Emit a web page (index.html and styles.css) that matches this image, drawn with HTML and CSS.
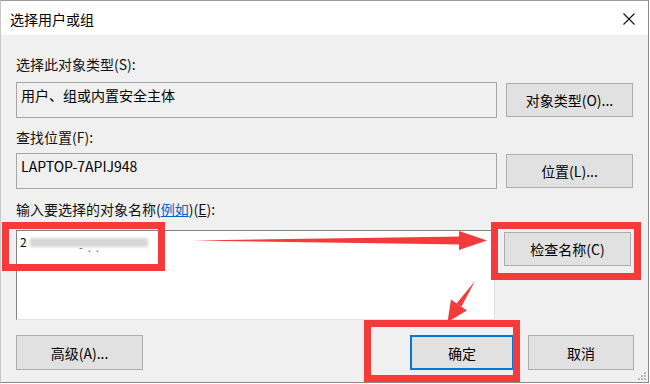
FILE: index.html
```html
<!DOCTYPE html>
<html lang="zh-CN">
<head>
<meta charset="utf-8">
<title>选择用户或组</title>
<link rel="stylesheet" href="styles.css">
</head>
<body>
<div class="window">
  <div class="titlebar">
    <span class="title">选择用户或组</span>
    <svg class="close" width="12" height="12" viewBox="0 0 12 12"><path d="M0.5 0.5 L11.5 11.5 M11.5 0.5 L0.5 11.5" stroke="#111" stroke-width="1.1" fill="none"/></svg>
  </div>
  <div class="content">
    <div class="label first">选择此对象类型(S):</div>
    <div class="row">
      <div class="field">用户、组或内置安全主体</div>
      <button class="btn">对象类型(O)...</button>
    </div>
    <div class="label second">查找位置(F):</div>
    <div class="row row2">
      <div class="field">LAPTOP-7APIJ948</div>
      <button class="btn">位置(L)...</button>
    </div>
    <div class="label third">输入要选择的对象名称(<a class="link">例如</a>)(<u>E</u>):</div>
    <div class="row row3">
      <div class="area"><span class="typed">2</span><span class="blur"></span><span class="dots">-&nbsp;&nbsp;.&nbsp;&nbsp;.</span></div>
      <button class="btn top">检查名称(C)</button>
    </div>
    <div class="bottom">
      <button class="btn">高级(A)...</button>
      <div class="spacer"></div>
      <button class="btn ok">确定</button>
      <button class="btn cancel">取消</button>
    </div>
  </div>
  <svg class="grip" width="8" height="8" viewBox="0 0 8 8"><g fill="#b5b5b5"><rect x="6" y="0" width="2" height="2"/><rect x="3" y="3" width="2" height="2"/><rect x="6" y="3" width="2" height="2"/><rect x="0" y="6" width="2" height="2"/><rect x="3" y="6" width="2" height="2"/><rect x="6" y="6" width="2" height="2"/></g></svg>
</div>
<svg class="marks" width="650" height="384" viewBox="0 0 650 384">
  <g fill="none" stroke="#f43a3a" stroke-width="7">
    <rect x="5.5" y="225.5" width="156" height="42"/>
    <rect x="494.5" y="225.5" width="143" height="51"/>
    <rect x="367.5" y="323.5" width="149" height="55"/>
  </g>
  <g fill="#f43a3a">
    <polygon points="192,240.5 463,236.5 463,244.5"/>
    <polygon points="459,231 487,240.5 459,250"/>
    <polygon points="475,281 461.5,306.5 456.5,303.5"/>
    <polygon points="467,310.5 447.5,322 451,299.5"/>
  </g>
</svg>
</body>
</html>
```

FILE: styles.css
```css
* { box-sizing: border-box; }
html, body {
  margin: 0;
  padding: 0;
  width: 650px;
  height: 384px;
  overflow: hidden;
  background: #ffffff;
}
body {
  position: relative;
  font-family: "Noto Sans CJK SC", "Noto Sans", sans-serif;
  font-size: 14px;
  color: #000;
}
.window {
  position: relative;
  width: 649px;
  height: 383px;
  border: 1px solid #8a8a8a;
  border-left-color: #c8c8c8;
  border-top-color: #9a9a9a;
  background: #f0f0f0;
  display: flex;
  flex-direction: column;
}
.titlebar {
  height: 34px;
  background: #ffffff;
  display: flex;
  align-items: center;
  padding: 0 13px 0 9px;
  flex-shrink: 0;
}
.title {
  flex: 1;
  line-height: 18px;
  padding-top: 1px;
}
.close { display: block; margin-top: 2px; }
.content {
  padding: 20px 14px 0 15px;
  display: flex;
  flex-direction: column;
}
.label {
  line-height: 18px;
  height: 18px;
  color: #111;
}
.label.first { margin-bottom: 9px; }
.label.second { margin-top: 10px; margin-bottom: 7px; }
.label.third { margin-top: 11px; margin-bottom: 12px; }
.link { color: #0066cc; text-decoration: underline; }
.row {
  display: flex;
  align-items: center;
  gap: 9px;
  height: 36px;
}
.field {
  width: 481px;
  height: 36px;
  border: 1px solid #a6a6a6;
  background: #f0f0f0;
  padding: 3px 0 0 4px;
  line-height: 18px;
  color: #000;
}
.btn {
  width: 127px;
  height: 34px;
  border: 1px solid #adadad;
  background: #e1e1e1;
  font-family: inherit;
  font-size: 14px;
  color: #000;
  padding: 0;
  margin: 0;
  line-height: 18px;
}
.row3 {
  height: 90px;
  align-items: flex-start;
}
.row3 .btn { margin-top: 2px; }
.area {
  position: relative;
  width: 479px;
  height: 90px;
  background: #ffffff;
  border: 1px solid #828282;
  border-right-color: #e3e3e3;
  border-bottom-color: #e3e3e3;
  padding: 3px 0 0 3px;
  line-height: 16px;
}
.typed { font-size: 12px; vertical-align: top; }
.blur {
  display: inline-block;
  width: 118px;
  height: 9px;
  margin-left: 3px;
  margin-top: 4px;
  background: #d6d6d6;
  filter: blur(1.5px);
  vertical-align: top;
}
.dots {
  position: absolute;
  left: 62px;
  top: 8px;
  font-size: 11px;
  color: #555;
}
.bottom {
  display: flex;
  margin-top: 15px;
  height: 35px;
}
.bottom .btn { height: 35px; }
.spacer { flex: 1; }
.ok {
  width: 104px;
  border: 2px solid #0078d7;
  margin-right: 14px;
}
.cancel { width: 106px; }
.grip {
  position: absolute;
  right: 2px;
  bottom: 2px;
}
.marks {
  position: absolute;
  left: 0;
  top: 0;
  pointer-events: none;
}
```
